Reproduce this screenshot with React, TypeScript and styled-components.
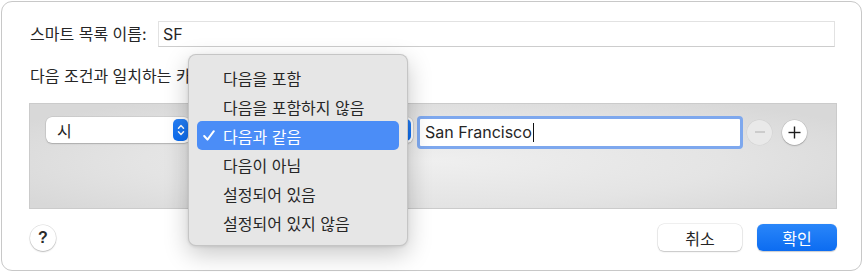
import React from "react";
import styled, { createGlobalStyle } from "styled-components";

const GlobalStyle = createGlobalStyle`
  html, body {
    margin: 0;
    padding: 0;
    background: #ffffff;
  }
  body {
    font-family: Inter, "Noto Sans CJK KR", sans-serif;
    font-size: 16px;
    color: #262626;
  }
  * {
    box-sizing: border-box;
  }
`;

const Window = styled.div`
  position: relative;
  margin: 1px;
  width: 861px;
  height: 270px;
  padding: 19px 24px 0 27px;
  border: 1px solid #c8c8c8;
  border-radius: 11px;
  background: #ffffff;
  display: flex;
  flex-direction: column;
`;

const NameRow = styled.div`
  display: flex;
  align-items: center;
  height: 26px;
`;

const Label = styled.span`
  width: 129px;
  padding-left: 1px;
  line-height: 20px;
  white-space: nowrap;
`;

const NameField = styled.div`
  flex: 1;
  height: 26px;
  margin-right: 2px;
  padding-left: 4px;
  display: flex;
  align-items: center;
  background: #ffffff;
  border: 1px solid #e2e2e2;
  border-bottom-color: #cdcdcd;
`;

const ConditionLabel = styled.div`
  margin-top: 19px;
  padding-left: 1px;
  line-height: 20px;
  white-space: nowrap;
`;

const Panel = styled.div`
  margin-top: 17px;
  height: 106px;
  border: 1px solid #cbcbcb;
  background: radial-gradient(ellipse 60% 70% at 50% 55%, #efefef 0%, #e4e4e4 60%, #d8d8d8 100%);
  padding: 11px 0 0 16px;
`;

const RuleRow = styled.div`
  display: flex;
  align-items: center;
  height: 34px;
`;

const Select = styled.div<{ $width: number; $gap?: number }>`
  width: ${(p) => p.$width}px;
  height: 26px;
  margin-left: ${(p) => p.$gap ?? 0}px;
  margin-bottom: 4px;
  padding: 0 2px 0 11px;
  display: flex;
  align-items: center;
  justify-content: space-between;
  background: #ffffff;
  border-radius: 6px;
  box-shadow: 0 0 0 0.5px rgba(0, 0, 0, 0.12), 0 1px 1.5px rgba(0, 0, 0, 0.18);
`;

const Stepper = styled.span`
  width: 15px;
  height: 22px;
  border-radius: 5px;
  background: linear-gradient(#2680f7, #0b6cf0);
  display: flex;
  align-items: center;
  justify-content: center;
`;

const ValueField = styled.div`
  width: 326px;
  height: 33px;
  margin-left: 4px;
  padding-left: 5px;
  display: flex;
  align-items: center;
  background: #ffffff;
  border: 3px solid #7ea8ee;
  border-radius: 4px;
`;

const Caret = styled.span`
  display: inline-block;
  width: 1px;
  height: 19px;
  background: #111111;
  margin-left: 1px;
`;

const RoundButton = styled.div<{ $disabled?: boolean }>`
  width: 25px;
  height: 25px;
  margin-left: ${(p) => (p.$disabled ? 4 : 10)}px;
  border-radius: 50%;
  display: flex;
  align-items: center;
  justify-content: center;
  background: ${(p) => (p.$disabled ? "#e9e9e9" : "#ffffff")};
  box-shadow: ${(p) =>
    p.$disabled
      ? "0 0 0 0.5px rgba(0,0,0,0.06)"
      : "0 0 0 0.5px rgba(0,0,0,0.12), 0 1px 1.5px rgba(0,0,0,0.2)"};
`;

const Footer = styled.div`
  margin-top: 15px;
  display: flex;
  align-items: center;
  height: 27px;
`;

const HelpButton = styled.div`
  width: 26px;
  height: 26px;
  margin-left: 1px;
  border-radius: 50%;
  background: #ffffff;
  box-shadow: 0 0 0 0.5px rgba(0, 0, 0, 0.15), 0 1px 1.5px rgba(0, 0, 0, 0.2);
  display: flex;
  align-items: center;
  justify-content: center;
  font-family: "Liberation Sans", sans-serif;
  font-weight: 700;
  font-size: 16px;
  color: #2a2a2a;
`;

const Spacer = styled.div`
  flex: 1;
`;

const PushButton = styled.div<{ $primary?: boolean; $width: number }>`
  width: ${(p) => p.$width}px;
  height: 27px;
  margin-left: 15px;
  border-radius: 6px;
  display: flex;
  align-items: center;
  justify-content: center;
  color: ${(p) => (p.$primary ? "#ffffff" : "#262626")};
  background: ${(p) => (p.$primary ? "linear-gradient(#2a86f9, #0c6cf1)" : "#ffffff")};
  box-shadow: ${(p) =>
    p.$primary
      ? "0 0.5px 1px rgba(0,0,0,0.2)"
      : "0 0 0 0.5px rgba(0,0,0,0.12), 0 1px 1.5px rgba(0,0,0,0.18)"};
`;

const Menu = styled.div`
  position: absolute;
  left: 186px;
  top: 52px;
  width: 220px;
  padding: 8px;
  background: #e6e6e6;
  border: 0.5px solid rgba(0, 0, 0, 0.14);
  border-radius: 8px;
  box-shadow: 0 8px 24px rgba(0, 0, 0, 0.22), 0 1px 3px rgba(0, 0, 0, 0.1);
`;

const MenuItem = styled.div<{ $active?: boolean }>`
  position: relative;
  height: 29px;
  padding-left: 26px;
  display: flex;
  align-items: center;
  border-radius: 5px;
  white-space: nowrap;
  color: ${(p) => (p.$active ? "#ffffff" : "#262626")};
  background: ${(p) => (p.$active ? "#4b8df7" : "transparent")};
`;

const Check = styled.svg`
  position: absolute;
  left: 6px;
  top: 9px;
`;

function StepperIcon() {
  return (
    <svg width="8" height="14" viewBox="0 0 8 14">
      <polyline points="1.5,5.2 4,2.6 6.5,5.2" fill="none" stroke="#fff" strokeWidth="1.5" strokeLinecap="round" strokeLinejoin="round" />
      <polyline points="1.5,8.8 4,11.4 6.5,8.8" fill="none" stroke="#fff" strokeWidth="1.5" strokeLinecap="round" strokeLinejoin="round" />
    </svg>
  );
}

const menuItems = [
  "다음을 포함",
  "다음을 포함하지 않음",
  "다음과 같음",
  "다음이 아님",
  "설정되어 있음",
  "설정되어 있지 않음",
];

export default function App() {
  return (
    <>
      <GlobalStyle />
      <Window>
        <NameRow>
          <Label>스마트 목록 이름:</Label>
          <NameField>SF</NameField>
        </NameRow>
        <ConditionLabel>다음 조건과 일치하는 카드 포함:</ConditionLabel>
        <Panel>
          <RuleRow>
            <Select $width={144}>
              <span>시</span>
              <Stepper>
                <StepperIcon />
              </Stepper>
            </Select>
            <Select $width={217} $gap={6}>
              <span />
              <Stepper>
                <StepperIcon />
              </Stepper>
            </Select>
            <ValueField>
              San Francisco
              <Caret />
            </ValueField>
            <RoundButton $disabled>
              <svg width="12" height="12" viewBox="0 0 12 12">
                <line x1="1" y1="6" x2="11" y2="6" stroke="#bdbdbd" strokeWidth="1.3" />
              </svg>
            </RoundButton>
            <RoundButton>
              <svg width="13" height="13" viewBox="0 0 13 13">
                <line x1="0.5" y1="6.5" x2="12.5" y2="6.5" stroke="#1e1e1e" strokeWidth="1.4" />
                <line x1="6.5" y1="0.5" x2="6.5" y2="12.5" stroke="#1e1e1e" strokeWidth="1.4" />
              </svg>
            </RoundButton>
          </RuleRow>
        </Panel>
        <Footer>
          <HelpButton>?</HelpButton>
          <Spacer />
          <PushButton $width={84}>취소</PushButton>
          <PushButton $width={80} $primary>
            확인
          </PushButton>
        </Footer>
        <Menu>
          {menuItems.map((item) => (
            <MenuItem key={item} $active={item === "다음과 같음"}>
              {item === "다음과 같음" && (
                <Check width="12" height="11" viewBox="0 0 12 11">
                  <polyline points="1.2,6 4.5,9.6 10.8,1.2" fill="none" stroke="#fff" strokeWidth="2" strokeLinecap="round" strokeLinejoin="round" />
                </Check>
              )}
              {item}
            </MenuItem>
          ))}
        </Menu>
      </Window>
    </>
  );
}
